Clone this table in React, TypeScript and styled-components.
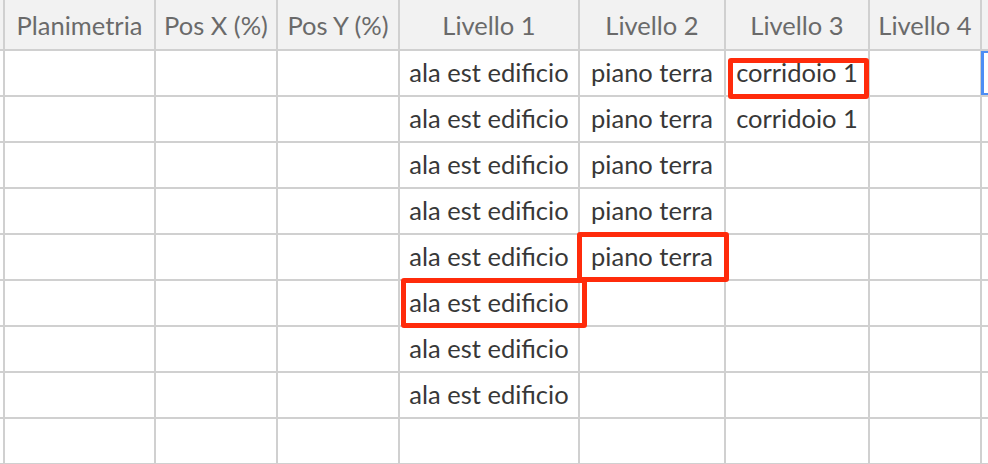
import React from "react";
import styled, { createGlobalStyle } from "styled-components";

const Global = createGlobalStyle`
  html, body { margin: 0; padding: 0; background: #ffffff; overflow: hidden; }
  body { font-family: Lato, "Open Sans", sans-serif; }
`;

const Viewport = styled.div`
  width: 988px;
  height: 464px;
  overflow: hidden;
  background: #ffffff;
`;

const Sheet = styled.div`
  display: grid;
  grid-template-columns: 3px 149px 120px 120px 178px 144px 142px 110px 100px;
  grid-template-rows: 49px repeat(9, 44px);
  gap: 2px;
  background: #d0d0d0;
  padding-bottom: 2px;
  width: max-content;
`;

const HeadCell = styled.div`
  background: #f2f2f2;
  color: #6a6a6a;
  font-size: 25.5px;
  display: flex;
  align-items: center;
  justify-content: center;
  white-space: nowrap;
  overflow: hidden;
`;

const Cell = styled.div<{ $selected?: boolean }>`
  position: relative;
  background: #ffffff;
  color: #383838;
  font-size: 25.5px;
  display: flex;
  align-items: center;
  justify-content: center;
  padding-bottom: 2px;
  box-sizing: border-box;
  white-space: nowrap;
  ${(p) =>
    p.$selected
      ? `box-shadow: inset 3px 0 0 #4d8ef5, inset 0 2px 0 #4d8ef5, inset 0 -2px 0 #4d8ef5; margin-left: -1px;`
      : ""}
`;

const Highlight = styled.div<{ $t: number; $l: number; $r: number; $b: number }>`
  position: absolute;
  top: ${(p) => p.$t}px;
  left: ${(p) => p.$l}px;
  right: ${(p) => p.$r}px;
  bottom: ${(p) => p.$b}px;
  border: 5px solid #ff2b0b;
  border-radius: 3px;
  z-index: 2;
  pointer-events: none;
`;

const headers = ["", "Planimetria", "Pos X (%)", "Pos Y (%)", "Livello 1", "Livello 2", "Livello 3", "Livello 4", ""];

type Mark = { t: number; l: number; r: number; b: number };

const rows: string[][] = [
  ["", "", "", "", "ala est edificio", "piano terra", "corridoio 1", "", ""],
  ["", "", "", "", "ala est edificio", "piano terra", "corridoio 1", "", ""],
  ["", "", "", "", "ala est edificio", "piano terra", "", "", ""],
  ["", "", "", "", "ala est edificio", "piano terra", "", "", ""],
  ["", "", "", "", "ala est edificio", "piano terra", "", "", ""],
  ["", "", "", "", "ala est edificio", "", "", "", ""],
  ["", "", "", "", "ala est edificio", "", "", "", ""],
  ["", "", "", "", "ala est edificio", "", "", "", ""],
  ["", "", "", "", "", "", "", "", ""],
];

const marks: Record<string, Mark> = {
  "0-6": { t: 7, l: 2, r: -1, b: -4 },
  "4-5": { t: -3, l: -3, r: -5, b: -3 },
  "5-4": { t: -3, l: 1, r: -9, b: -3 },
};

export default function App() {
  return (
    <Viewport>
      <Global />
      <Sheet>
        {headers.map((h, i) => (
          <HeadCell key={`h${i}`}>{h}</HeadCell>
        ))}
        {rows.map((r, ri) =>
          r.map((c, ci) => {
            const m = marks[`${ri}-${ci}`];
            return (
              <Cell key={`${ri}-${ci}`} $selected={ri === 0 && ci === 8}>
                {c}
                {m && <Highlight $t={m.t} $l={m.l} $r={m.r} $b={m.b} />}
              </Cell>
            );
          })
        )}
      </Sheet>
    </Viewport>
  );
}
